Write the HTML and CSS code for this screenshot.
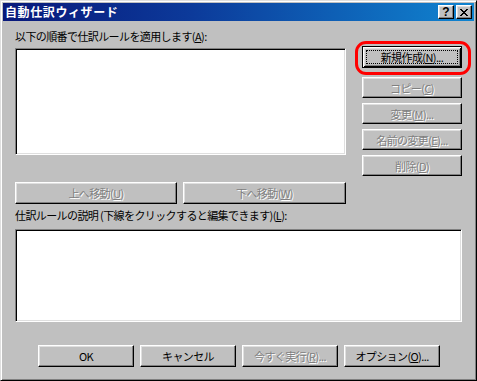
FILE: index.html
```html
<!DOCTYPE html>
<html lang="ja">
<head>
<meta charset="utf-8">
<title>自動仕訳ウィザード</title>
<link rel="stylesheet" href="styles.css">
</head>
<body>
<div class="window">
  <div class="titlebar">
    <span class="title">自動仕訳ウィザード</span>
    <div class="tbtns">
      <span class="tbtn help">?</span>
      <span class="tbtn close">
        <svg width="8" height="7" viewBox="0 0 8 7" shape-rendering="crispEdges"><path d="M0 0h2v1h-2zM6 0h2v1h-2zM1 1h2v1h-2zM5 1h2v1h-2zM2 2h4v1h-4zM3 3h2v1h-2zM2 4h4v1h-4zM1 5h2v1h-2zM5 5h2v1h-2zM0 6h2v1h-2zM6 6h2v1h-2z" fill="#000"/></svg>
      </span>
    </div>
  </div>
  <div class="client">
    <div class="top">
      <div class="leftcol">
        <div class="label">以下の順番で仕訳ルールを適用します(<u>A</u>):</div>
        <div class="sunken listbox"></div>
      </div>
      <div class="rightcol">
        <div class="btn default"><span class="focus">新規作成(<u>N</u>)...</span></div>
        <div class="btn dis first">コピー(<u>C</u>)</div>
        <div class="btn dis">変更(<u>M</u>)...</div>
        <div class="btn dis">名前の変更(<u>E</u>)...</div>
        <div class="btn dis">削除(<u>D</u>)</div>
      </div>
    </div>
    <div class="moverow">
      <div class="btn dis up">上へ移動(<u>U</u>)</div>
      <div class="btn dis down">下へ移動(<u>W</u>)</div>
    </div>
    <div class="label label2">仕訳ルールの説明 (下線をクリックすると編集できます)(<u>L</u>):</div>
    <div class="sunken descbox"></div>
    <div class="bottomrow">
      <div class="btn wide">OK</div>
      <div class="btn wide">キャンセル</div>
      <div class="btn wide dis">今すぐ実行(<u>R</u>)...</div>
      <div class="btn wide">オプション(<u>O</u>)...</div>
    </div>
  </div>
  <div class="highlight"></div>
</div>
</body>
</html>
```
FILE: styles.css
```css
* { box-sizing: border-box; }
html, body { margin: 0; padding: 0; background: #c0c0c0; }
body {
  font-family: "Noto Sans CJK JP", "Liberation Sans", sans-serif;
  font-size: 11px;
  letter-spacing: -0.6px;
  color: #000;
}
.window {
  position: relative;
  width: 477px;
  height: 381px;
  background: #c0c0c0;
  border: 1px solid;
  border-color: #dfdfdf #000 #000 #dfdfdf;
  box-shadow: inset 1px 1px #fff, inset -1px -1px #808080;
  padding: 2px;
  display: flex;
  flex-direction: column;
}
.titlebar {
  height: 18px;
  background: linear-gradient(to right, #08187a 0%, #0c3a9a 40%, #1084d0 100%);
  display: flex;
  align-items: center;
  justify-content: space-between;
  padding: 0 2px 0 2px;
}
.title {
  color: #fff;
  font-weight: bold;
  font-size: 12px;
  letter-spacing: 0.6px;
  line-height: 18px;
}
.tbtns { display: flex; gap: 2px; }
.tbtn {
  width: 16px;
  height: 14px;
  background: #c0c0c0;
  border: 1px solid;
  border-color: #fff #000 #000 #fff;
  box-shadow: inset -1px -1px #808080, inset 1px 1px #dfdfdf;
  display: flex;
  align-items: center;
  justify-content: center;
}
.help {
  font-family: "Liberation Sans", sans-serif;
  font-weight: bold;
  font-size: 12px;
  letter-spacing: 0;
  line-height: 12px;
}
.close svg { display: block; }
.client {
  margin-top: 1px;
  padding-left: 12px;
  display: flex;
  flex-direction: column;
}
.top { display: flex; gap: 16px; }
.leftcol { width: 331px; display: flex; flex-direction: column; }
.label {
  margin-top: 7px;
  height: 14px;
  line-height: 14px;
  white-space: nowrap;
}
u { text-decoration: underline; text-underline-offset: 1px; }
.sunken {
  background: #fff;
  border: 1px solid;
  border-color: #808080 #fff #fff #808080;
  box-shadow: inset 1px 1px #000, inset -1px -1px #dfdfdf;
}
.listbox { margin-top: 5px; height: 107px; }
.rightcol {
  width: 100px;
  display: flex;
  flex-direction: column;
  gap: 5px;
  padding-top: 24px;
}
.btn {
  height: 21px;
  background: #c0c0c0;
  border: 1px solid;
  border-color: #fff #000 #000 #fff;
  box-shadow: inset -1px -1px #808080, inset 1px 1px #dfdfdf;
  display: flex;
  align-items: center;
  justify-content: center;
  line-height: 14px;
  white-space: nowrap;
}
.btn.default {
  height: 22px;
  border-color: #000;
  box-shadow: inset 1px 1px #fff, inset -1px -1px #000, inset 2px 2px #dfdfdf, inset -2px -2px #808080;
  padding: 3px;
}
.focus {
  flex: 1;
  align-self: stretch;
  border: 1px dotted #000;
  display: flex;
  align-items: center;
  justify-content: center;
}
.btn.first { margin-top: 4px; }
.btn.dis { color: #808080; text-shadow: 1px 1px 0 #fff; }
.moverow { display: flex; gap: 6px; margin-top: 6px; }
.moverow .btn { height: 22px; }
.up { width: 162px; }
.down { width: 163px; }
.label2 { margin-top: 4px; }
.descbox { margin-top: 7px; width: 447px; height: 93px; }
.bottomrow {
  display: flex;
  gap: 6px;
  margin-top: 23px;
  padding-left: 23px;
}
.btn.wide { width: 96px; height: 22px; }
.highlight {
  position: absolute;
  left: 354px;
  top: 40px;
  width: 116px;
  height: 34px;
  border: 3px solid #f00;
  border-radius: 11px;
}
```
